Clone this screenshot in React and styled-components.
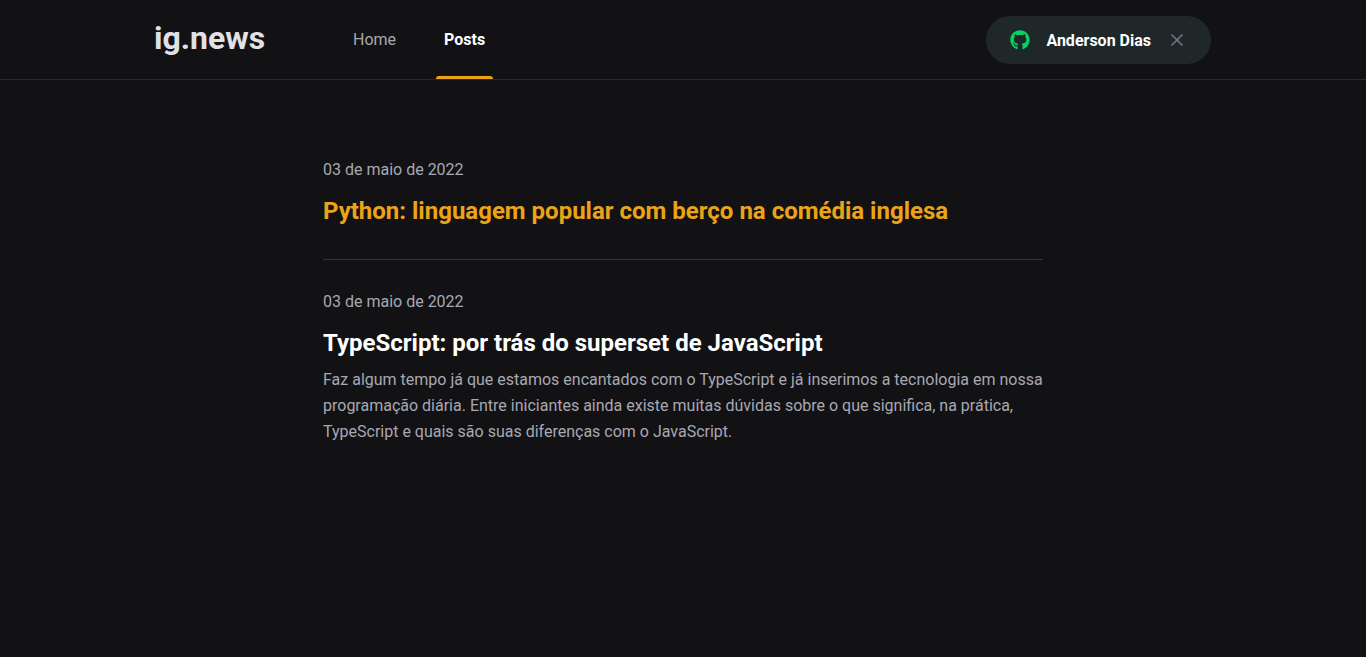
import React from "react";
import styled, { createGlobalStyle } from "styled-components";
import { FaGithub } from "react-icons/fa";
import { FiX } from "react-icons/fi";

const GlobalStyle = createGlobalStyle`
  * { margin: 0; padding: 0; box-sizing: border-box; }
  body { background: #121214; color: #fff; font: 400 16px Roboto, sans-serif; }
  button { font: inherit; cursor: pointer; }
  a { color: inherit; text-decoration: none; }
`;

const Header = styled.header`
  height: 80px;
  border-bottom: 1px solid #29292e;
`;

const HeaderContent = styled.div`
  max-width: 1120px;
  height: 80px;
  margin: 0 auto;
  padding: 0 32px;
  display: flex;
  align-items: center;
`;

const Logo = styled.a`
  width: 111px;
  margin: -4px 0 0 -1px;
  font-size: 32px;
  line-height: 38px;
  font-weight: 700;
  color: #e1e1e6;
  white-space: nowrap;
`;

const Nav = styled.nav`
  display: flex;
  gap: 32px;
  height: 80px;
  margin-left: 80px;
`;

const NavLink = styled.a`
  display: flex;
  flex-direction: column;
  height: 79px;
  padding: 0 8px;
  line-height: 79px;
  color: ${(p) => (p.$active ? "#fff" : "#a8a8b3")};
  font-weight: ${(p) => (p.$active ? 700 : 400)};

  &::after {
    content: "";
    height: 3px;
    margin: -3px -8px 0;
    border-radius: 3px 3px 0 0;
    background: ${(p) => (p.$active ? "#eba417" : "transparent")};
  }
`;

const UserButton = styled.button`
  height: 48px;
  margin-left: auto;
  padding: 0 24px;
  display: flex;
  align-items: center;
  border: 0;
  border-radius: 48px;
  background: #1f2729;
  color: #fff;
  font-weight: 700;
`;

const GithubIcon = styled(FaGithub)`
  width: 20px;
  height: 20px;
  margin-right: 16px;
  color: #04d361;
`;

const CloseIcon = styled(FiX)`
  width: 20px;
  height: 20px;
  margin-left: 16px;
  color: #737380;
`;

const Main = styled.main`
  max-width: 1120px;
  margin: 0 auto;
  padding: 0 32px;
`;

const Posts = styled.div`
  max-width: 720px;
  margin: 80px auto 0;
`;

const Post = styled.a`
  display: block;

  & + & {
    margin-top: 32px;
    padding-top: 32px;
    border-top: 1px solid #323238;
  }
`;

const PostDate = styled.time`
  display: flex;
  align-items: center;
  color: #a8a8b3;
`;

const Title = styled.strong`
  display: block;
  margin-top: 16px;
  font-size: 24px;
  line-height: 32px;
  font-weight: 700;
  color: ${(p) => (p.$highlight ? "#eba417" : "#fff")};
`;

const Excerpt = styled.p`
  margin-top: 8px;
  line-height: 26px;
  color: #a8a8b3;
`;

const posts = [
  {
    date: "03 de maio de 2022",
    title: "Python: linguagem popular com berço na comédia inglesa",
    highlight: true,
  },
  {
    date: "03 de maio de 2022",
    title: "TypeScript: por trás do superset de JavaScript",
    excerpt:
      "Faz algum tempo já que estamos encantados com o TypeScript e já inserimos a tecnologia em nossa programação diária. Entre iniciantes ainda existe muitas dúvidas sobre o que significa, na prática, TypeScript e quais são suas diferenças com o JavaScript.",
  },
];

export default function App() {
  return (
    <>
      <GlobalStyle />
      <Header>
        <HeaderContent>
          <Logo href="#">ig.news</Logo>
          <Nav>
            <NavLink href="#">Home</NavLink>
            <NavLink href="#" $active>Posts</NavLink>
          </Nav>
          <UserButton type="button">
            <GithubIcon />
            Anderson Dias
            <CloseIcon />
          </UserButton>
        </HeaderContent>
      </Header>
      <Main>
        <Posts>
          {posts.map((post) => (
            <Post href="#" key={post.title}>
              <PostDate>{post.date}</PostDate>
              <Title $highlight={post.highlight}>{post.title}</Title>
              {post.excerpt && <Excerpt>{post.excerpt}</Excerpt>}
            </Post>
          ))}
        </Posts>
      </Main>
    </>
  );
}
